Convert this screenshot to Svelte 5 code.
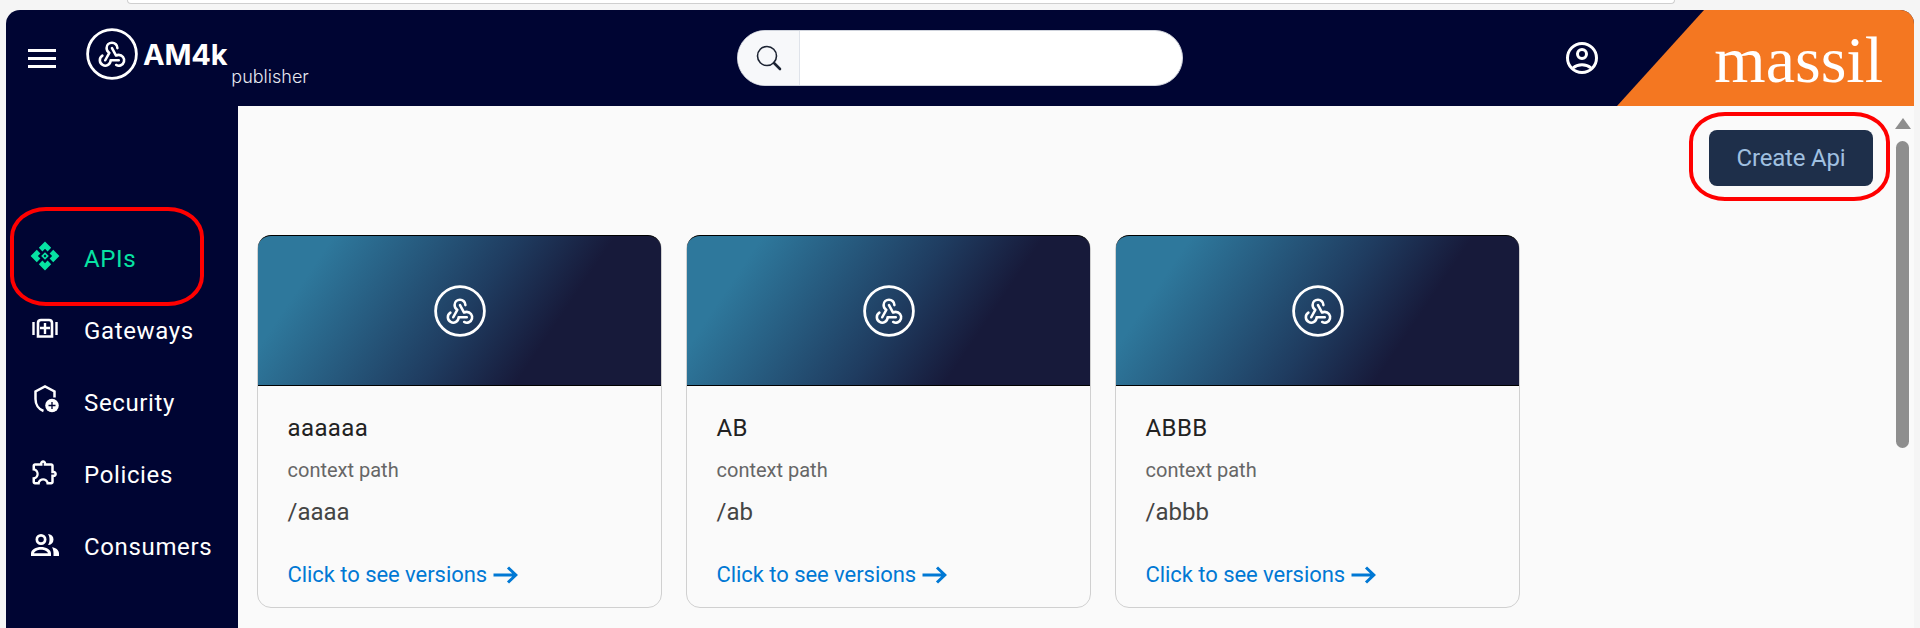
<script>
  const nav = [
    { label: 'APIs', icon: 'apis', active: true },
    { label: 'Gateways', icon: 'gateways' },
    { label: 'Security', icon: 'security' },
    { label: 'Policies', icon: 'policies' },
    { label: 'Consumers', icon: 'consumers' }
  ]

  const apis = [
    { name: 'aaaaaa', path: '/aaaa' },
    { name: 'AB', path: '/ab' },
    { name: 'ABBB', path: '/abbb' }
  ]

  const petals = [0, 90, 180, 270]
</script>

{#snippet webhook(size)}
  <svg class="hook" width={size} height={size} viewBox="0 0 52 52" fill="none" stroke="#fff">
    <circle cx="26" cy="26" r="24.4" stroke-width="2.8" />
    <g transform="translate(9.800 9.300) scale(1.350)" stroke-width="1.900" stroke-linecap="round" stroke-linejoin="round">
      <path d="M4.876 13.61a4 4 0 1 0 6.124 3.39h6" />
      <path d="M15.066 20.502a4 4 0 1 0 1.934 -7.502c-.706 0 -1.424 .179 -2 .5l-3 -5.5" />
      <path d="M16 8a4 4 0 1 0 -8 0c0 1.506 .77 2.818 2 3.5l-3 5.5" />
    </g>
  </svg>
{/snippet}

<div class="page">
  <div class="topbar"><div class="omnibox"></div></div>
  <div class="shell">
    <header>
      <button class="burger" aria-label="menu"><span></span><span></span><span></span></button>
      <div class="logo">
        {@render webhook(52)}
        <span class="word">AM4k</span>
        <span class="sub">publisher</span>
      </div>
      <div class="search">
        <div class="search-icon">
          <svg width="28" height="28" viewBox="0 0 28 28" fill="none" stroke="#1d2433">
            <circle cx="12" cy="12" r="9.500" stroke-width="1.600" />
            <path d="M19 19l6 6" stroke-width="2.600" stroke-linecap="round" />
          </svg>
        </div>
        <div class="search-field"></div>
      </div>
      <svg class="user" width="34" height="34" viewBox="0 0 34 34" fill="none" stroke="#fff" stroke-width="3">
        <circle cx="17" cy="17" r="14.500" />
        <circle cx="17" cy="13" r="4.500" />
        <path d="M8 27c2.500-2.300 5.600-3.300 9-3.300s6.500 1 9 3.300" />
      </svg>
      <div class="brand">massil</div>
    </header>

    <div class="body">
      <aside>
        <nav>
          {#each nav as item}
            <a class="item" class:active={item.active} href="#top">
              <span class="ico">
                {#if item.icon === 'apis'}
                  <svg class="apis" width="32" height="32" viewBox="0 0 30 30" fill="#07e3a3">
                    {#each petals as deg}
                      <path transform="rotate({deg} 15 15)" d="M15 1.500l5.800 5.800-3.400 3.400-2.400-2.400-2.400 2.400-3.400-3.400z" />
                    {/each}
                    <path d="M15 11.400l3.600 3.600-3.600 3.600-3.600-3.600zM15 13.700l-1.300 1.300 1.300 1.300 1.300-1.300z" fill-rule="evenodd" />
                  </svg>
                {:else if item.icon === 'gateways'}
                  <svg width="30" height="26" viewBox="0 0 30 26" fill="none" stroke="#fff">
                    <path d="M3.500 7v13M26.500 7v13" stroke-width="2.400" />
                    <path d="M8 21.500V8c0-2 1-3 3-3h8c2 0 3 1 3 3v13.500z" stroke-width="2.600" />
                    <path d="M15 8v11M10 13h10" stroke-width="2.400" />
                  </svg>
                {:else if item.icon === 'security'}
                  <svg width="30" height="30" viewBox="0 0 30 30" fill="none" stroke="#fff">
                    <path d="M13.500 26C8.500 24.300 5.500 19.500 5.500 14V6.500L15 1.500l9.500 5v6" stroke-width="2.500" />
                    <circle cx="22" cy="20.500" r="6.800" fill="#fff" stroke="none" />
                    <path d="M22 17v7M18.500 20.500h7" stroke="#000533" stroke-width="1.300" />
                  </svg>
                {:else if item.icon === 'policies'}
                  <svg width="30" height="30" viewBox="0 0 24 24" fill="#fff">
                    <path d="M10.500 4.500c.28 0 .5.22.5.5v2h6v6h2c.28 0 .5.22.5.5s-.22.5-.5.5h-2v6h-2.120c-.68-1.750-2.390-3-4.380-3s-3.700 1.250-4.380 3H4v-2.120c1.750-.68 3-2.390 3-4.380 0-1.990-1.240-3.700-2.990-4.380L4 7h6V5c0-.28.22-.5.5-.5m0-2C9.120 2.500 8 3.620 8 5H4c-1.100 0-1.990.9-1.990 2v3.800h.49c1.490 0 2.700 1.210 2.700 2.700s-1.210 2.700-2.700 2.700H2V20c0 1.100.9 2 2 2h3.800v-.5c0-1.490 1.210-2.700 2.700-2.700 1.490 0 2.700 1.210 2.700 2.700v.5H17c1.100 0 2-.9 2-2v-4c1.380 0 2.500-1.120 2.500-2.500S20.380 11 19 11V7c0-1.100-.9-2-2-2h-4c0-1.380-1.120-2.500-2.500-2.500z" />
                  </svg>
                {:else}
                  <svg width="30" height="26" viewBox="0 0 30 26" fill="#fff">
                    <path d="M11 3a5.500 5.500 0 1 1 0 11 5.500 5.500 0 0 1 0-11zm0 2.700a2.800 2.800 0 1 0 0 5.600 2.800 2.800 0 0 0 0-5.600z" fill-rule="evenodd" />
                    <path d="M18 3a5.500 5.500 0 0 1 0 11c1-1.500 1.500-3.500 1.500-5.500S19 4.500 18 3z" />
                    <path d="M1 25v-2.500C1 18.500 6 16 11 16s10 2.500 10 6.500V25zm3-2.700h14c-.5-2-3.800-3.600-7-3.600s-6.500 1.600-7 3.600z" fill-rule="evenodd" />
                    <path d="M22 16.200c4 .6 7 2.800 7 6.300V25h-5.500v-2.500c0-2.400-.5-4.600-1.500-6.300z" />
                  </svg>
                {/if}
              </span>
              <span class="label">{item.label}</span>
            </a>
          {/each}
        </nav>
      </aside>

      <main>
        <div class="actions">
          <button class="create">Create Api</button>
        </div>
        <div class="cards">
          {#each apis as api}
            <article class="card">
              <div class="banner">{@render webhook(52)}</div>
              <div class="info">
                <div class="name">{api.name}</div>
                <div class="caption">context path</div>
                <div class="path">{api.path}</div>
                <a class="versions" href="#top">
                  Click to see versions
                  <svg width="25" height="18" viewBox="0 0 25 18" fill="none" stroke="#0078d4" stroke-width="3">
                    <path d="M0.500 9h22M15 1.500L22.800 9 15 16.500" />
                  </svg>
                </a>
              </div>
            </article>
          {/each}
        </div>
      </main>
    </div>

    <div class="scrollbar"><span class="up"></span><span class="thumb"></span></div>
    <div class="mark mark-nav"></div>
    <div class="mark mark-create"></div>
  </div>
</div>

<style>
  :global(body) {
    margin: 0;
    background: #f5f5f5;
    overflow: hidden;
  }

  .page {
    height: 628px;
    padding: 0 6px;
    overflow: hidden;
    font-family: Roboto, "Liberation Sans", sans-serif;
  }

  .topbar {
    height: 10px;
    margin: 0 -6px;
    padding: 0 245px 0 127px;
  }
  .omnibox {
    height: 3px;
    background: #fff;
    border: 1px solid #cfcfcf;
    border-top: none;
    border-radius: 0 0 12px 12px;
  }

  .shell {
    position: relative;
    height: 618px;
    border-radius: 14px 14px 0 0;
    overflow: hidden;
    background: #fafafa;
  }

  header {
    height: 96px;
    display: flex;
    align-items: center;
    background: #000533;
    position: relative;
  }

  .burger {
    width: 28px;
    height: 19px;
    margin-left: 22px;
    padding: 0;
    border: none;
    background: none;
    display: flex;
    flex-direction: column;
    justify-content: space-between;
  }
  .burger span {
    display: block;
    height: 3px;
    background: #fff;
  }

  .logo {
    margin-left: 30px;
    width: 651px;
    display: flex;
    align-items: flex-start;
    color: #fff;
    position: relative;
    top: -1px;
  }
  .hook { display: block; flex: none; }
  .word {
    margin: 10px 0 0 5px;
    font: 700 29px/34px Inter, sans-serif;
    letter-spacing: -0.2px;
  }
  .sub {
    margin: 39px 0 0 4px;
    font: 300 18px/20px Inter, sans-serif;
    color: #e6e8f0;
  }

  .search {
    width: 446px;
    height: 56px;
    display: flex;
    border-radius: 28px;
    overflow: hidden;
    background: #fff;
    border: 1px solid #cfd3dc;
    box-sizing: border-box;
  }
  .search-icon {
    width: 61px;
    background: #f7f8fa;
    border-right: 1px solid #dfe3ea;
    display: flex;
    align-items: center;
    justify-content: center;
  }
  .search-field { flex: 1; }

  .user {
    margin-left: 382px;
    flex: none;
  }

  .brand {
    position: absolute;
    top: 0;
    right: 0;
    bottom: 0;
    width: 297px;
    background: #f47721;
    clip-path: polygon(87px 0, 100% 0, 100% 100%, 0 100%);
    color: #fff;
    font: 400 66px/100px "Liberation Serif", serif;
    text-align: right;
    padding-right: 31px;
    box-sizing: border-box;
  }

  .body {
    display: flex;
    height: 522px;
  }

  aside {
    width: 232px;
    flex: none;
    background: #000533;
    padding-top: 117px;
    box-sizing: border-box;
  }
  .item {
    height: 72px;
    display: flex;
    align-items: center;
    color: #fff;
    text-decoration: none;
    font-size: 24px;
    letter-spacing: 0.64px;
  }
  .item.active { color: #07e3a3; }
  .ico {
    width: 78px;
    padding-left: 24px;
    box-sizing: border-box;
    display: flex;
    flex: none;
    position: relative;
    top: -3px;
  }
  .ico svg { display: block; }
  .ico .apis { margin: -1px; }

  main {
    flex: 1;
    padding: 24px 41px 0 19px;
  }
  .actions {
    display: flex;
    justify-content: flex-end;
    height: 105px;
  }
  .create {
    width: 164px;
    height: 56px;
    border: none;
    border-radius: 8px;
    background: #1e2f4a;
    color: #a0c0e0;
    font: 400 24px Roboto, sans-serif;
    letter-spacing: -0.2px;
  }

  .cards {
    display: flex;
    gap: 24px;
  }
  .card {
    width: 405px;
    height: 373px;
    flex: none;
    box-sizing: border-box;
    border: 1px solid #d0d0d0;
    border-radius: 14px;
  }
  .banner {
    height: 151px;
    margin-top: -1px;
    box-sizing: border-box;
    border: 1px solid #000;
    border-width: 1px 0;
    border-radius: 13px 13px 0 0;
    background: linear-gradient(124deg, #2e789c 15%, #1f3c60 52%, #171a3a 71%);
    display: flex;
    align-items: center;
    justify-content: center;
  }

  .info {
    padding: 28px 29.500px 0;
  }
  .name {
    font-size: 24px;
    letter-spacing: 0.4px;
    line-height: 28px;
    color: #222;
  }
  .caption {
    margin-top: 17px;
    font-size: 20px;
    line-height: 22px;
    color: #666;
  }
  .path {
    margin-top: 18px;
    font-size: 24px;
    line-height: 26px;
    color: #444;
  }
  .versions {
    margin-top: 37px;
    display: flex;
    align-items: center;
    gap: 6px;
    color: #0078d4;
    font-size: 22px;
    letter-spacing: -0.05px;
    line-height: 26px;
    text-decoration: none;
  }

  .scrollbar {
    position: absolute;
    top: 108px;
    right: 5px;
    width: 13px;
    display: flex;
    flex-direction: column;
    align-items: center;
    gap: 12px;
  }
  .up {
    width: 0;
    height: 0;
    border-left: 8px solid transparent;
    border-right: 8px solid transparent;
    border-bottom: 11px solid #8e8e8e;
  }
  .thumb {
    width: 13px;
    height: 307px;
    border-radius: 7px;
    background: #8e8e8e;
  }

  .mark {
    position: absolute;
    box-sizing: border-box;
    border: 4px solid #f00;
    border-radius: 36px / 30px;
  }
  .mark-nav {
    left: 4px;
    top: 197px;
    width: 194px;
    height: 99px;
  }
  .mark-create {
    left: 1683px;
    top: 102px;
    width: 201px;
    height: 89px;
  }
</style>
